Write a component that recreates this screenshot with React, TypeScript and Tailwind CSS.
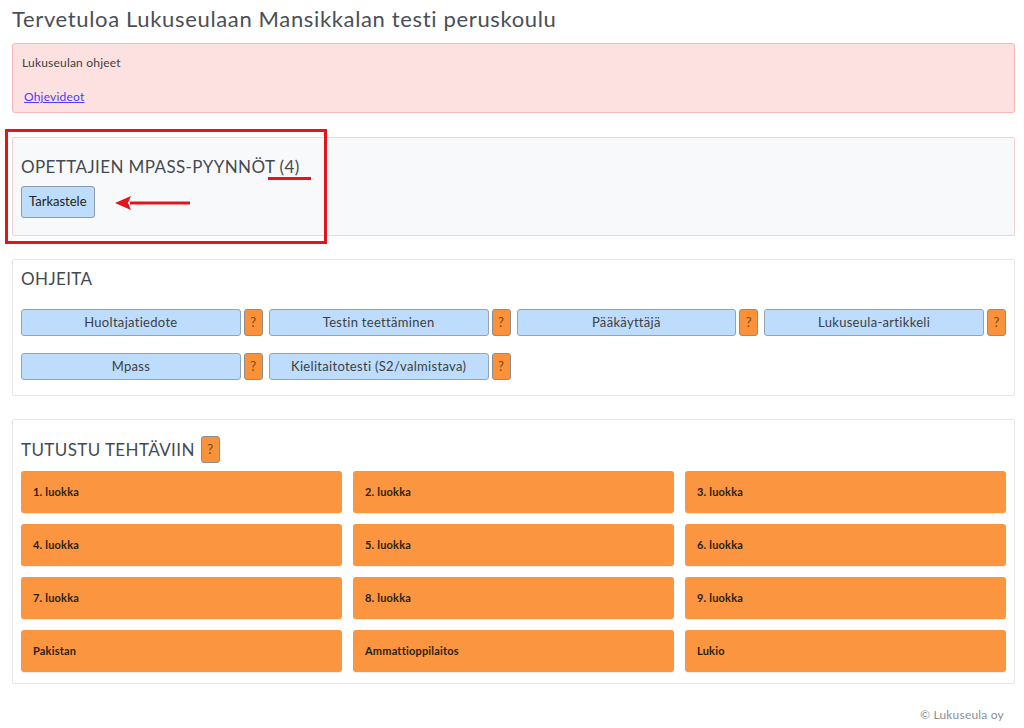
import React from 'react';

const guides = [
  'Huoltajatiedote',
  'Testin teettäminen',
  'Pääkäyttäjä',
  'Lukuseula-artikkeli',
  'Mpass',
  'Kielitaitotesti (S2/valmistava)',
];

const grades = [
  '1. luokka',
  '2. luokka',
  '3. luokka',
  '4. luokka',
  '5. luokka',
  '6. luokka',
  '7. luokka',
  '8. luokka',
  '9. luokka',
  'Pakistan',
  'Ammattioppilaitos',
  'Lukio',
];

function HelpButton({ className = '' }: { className?: string }) {
  return (
    <button
      className={`flex h-[27px] w-[19px] items-center justify-center rounded-[3px] border border-[#8d8d8d] bg-[#fb9138] text-[13px] text-[#6b4a2a] ${className}`}
    >
      ?
    </button>
  );
}

export default function App() {
  return (
    <div className="min-h-[728px] bg-white font-['Lato','Open_Sans',sans-serif] text-[#454b52]">
      <div className="ml-[12px] mr-[9px] pt-[5px]">
        <h1 className="text-[22px] leading-[28px] tracking-[0.65px] text-[#4a4f57]">
          Tervetuloa Lukuseulaan Mansikkalan testi peruskoulu
        </h1>

        <div className="mt-[10px] h-[70px] rounded-[3px] border border-[#f6b8b8] bg-[#fde0e0] px-[9px] pt-[11px] text-[12px]">
          <p className="leading-[16px] tracking-[0.2px] text-[#3f3f3f]">Lukuseulan ohjeet</p>
          <a href="#" className="ml-[2px] mt-[18px] block leading-[16px] tracking-[0.2px] text-[#4c3df5] underline">
            Ohjevideot
          </a>
        </div>

        <div className="relative mt-[24px]">
          <div className="h-[99px] rounded-[2px] border border-[#f3d2d2] bg-[#f8f9fb] px-[8px] pt-[18px]">
            <h2 className="text-[17px] leading-[22px] tracking-[0.4px] text-[#444a52]">OPETTAJIEN MPASS-PYYNNÖT (4)</h2>
            <button className="mt-[8px] h-[32px] rounded-[3px] border border-[#8c9aab] bg-[#bedcfb] px-[7px] text-[13px] text-[#222]">
              Tarkastele
            </button>
          </div>
          {/* annotation overlays */}
          <div className="pointer-events-none absolute left-[-7px] top-[-8px] h-[115px] w-[322px] border-[3px] border-[#e0161b]" />
          <div className="pointer-events-none absolute left-[256px] top-[40px] h-[3px] w-[43px] bg-[#e0161b]" />
          <svg className="pointer-events-none absolute left-[102px] top-[58px]" width="78" height="16" viewBox="0 0 78 16">
            <path d="M16 8 H76" stroke="#e0161b" strokeWidth="3" />
            <path d="M1 8 L17 1 L14 8 L17 15 Z" fill="#e0161b" />
          </svg>
        </div>

        <div className="mt-[23px] h-[137px] rounded-[2px] border border-[#e6e6e6] bg-white px-[8px] pt-[8px]">
          <h2 className="text-[17px] leading-[22px] tracking-[0.4px] text-[#444a52]">OHJEITA</h2>
          <div className="mt-[19px] grid grid-cols-4 gap-x-[6px] gap-y-[17px]">
            {guides.map((g) => (
              <div key={g} className="flex">
                <button className="h-[27px] flex-1 rounded-[3px] border border-[#95a3b4] bg-[#bedcfb] text-[13px] tracking-[0.3px] text-[#3a3f45]">
                  {g}
                </button>
                <HelpButton className="ml-[3px]" />
              </div>
            ))}
          </div>
        </div>

        <div className="mt-[23px] rounded-[2px] border border-[#e6e6e6] bg-white px-[8px] pb-[11px] pt-[16px]">
          <div className="flex items-center">
            <h2 className="text-[17px] leading-[22px] tracking-[0.4px] text-[#444a52]">TUTUSTU TEHTÄVIIN</h2>
            <HelpButton className="ml-[6px] h-[22px]" />
          </div>
          <div className="mt-[8px] grid grid-cols-3 gap-x-[11px] gap-y-[11px]">
            {grades.map((g) => (
              <button
                key={g}
                className="h-[42px] rounded-[3px] bg-[#fb9540] px-[12px] text-left text-[11px] font-bold tracking-[0.2px] text-[#2a1f14] shadow-[0_1px_1px_rgba(0,0,0,0.08)]"
              >
                {g}
              </button>
            ))}
          </div>
        </div>

        <p className="mr-[11px] mt-[22px] text-right text-[12px] tracking-[0.2px] text-[#8a8f96]">© Lukuseula oy</p>
      </div>
    </div>
  );
}
